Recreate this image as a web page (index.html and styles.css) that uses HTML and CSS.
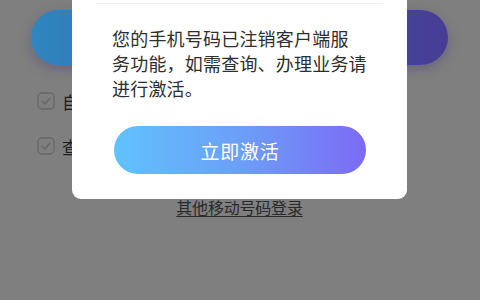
FILE: index.html
```html
<!DOCTYPE html>
<html lang="zh-CN">
<head>
<meta charset="utf-8">
<link rel="stylesheet" href="styles.css">
</head>
<body>
<div class="page">
  <div class="login-btn"></div>
  <div class="check-row row1">
    <span class="box"><svg viewBox="0 0 18 18" width="18" height="18"><rect x="1" y="1" width="16" height="16" rx="4" fill="none" stroke="#686868" stroke-width="1.4"/><path d="M5 9.2 L8 12 L13 6" fill="none" stroke="#686868" stroke-width="1.4" stroke-linecap="round" stroke-linejoin="round"/></svg></span>
    <span class="label">自动登录</span>
  </div>
  <div class="check-row row2">
    <span class="box"><svg viewBox="0 0 18 18" width="18" height="18"><rect x="1" y="1" width="16" height="16" rx="4" fill="none" stroke="#686868" stroke-width="1.4"/><path d="M5 9.2 L8 12 L13 6" fill="none" stroke="#686868" stroke-width="1.4" stroke-linecap="round" stroke-linejoin="round"/></svg></span>
    <span class="label">查看协议</span>
  </div>
  <div class="other-link"><span>其他移动号码登录</span></div>
</div>
<div class="modal">
  <div class="modal-head"></div>
  <p class="modal-text">您的手机号码已注销客户端服<br>务功能，如需查询、办理业务请<br>进行激活。</p>
  <div class="modal-btn">立即激活</div>
</div>
</body>
</html>
```
FILE: styles.css
```css
html, body {
  margin: 0;
  padding: 0;
}
body {
  width: 480px;
  height: 300px;
  overflow: hidden;
  background: #7f7f7f;
  font-family: "Noto Sans CJK SC", "Noto Sans", sans-serif;
  position: relative;
}
.page {
  display: flex;
  flex-direction: column;
  padding: 10px 32px 0 31px;
}
.login-btn {
  height: 55px;
  border-radius: 28px;
  background: linear-gradient(90deg, #2f86bf 0%, #3c5ea8 50%, #483c94 100%);
  box-shadow: 0 4px 12px rgba(60, 50, 120, 0.35);
}
.check-row {
  display: flex;
  align-items: center;
  gap: 7px;
  padding-left: 6px;
  height: 24px;
}
.row1 { margin-top: 24px; }
.row2 { margin-top: 21px; }
.box {
  display: flex;
  width: 18px;
  height: 18px;
}
.label {
  font-size: 17px;
  color: #1c1c1c;
}
.other-link {
  display: flex;
  justify-content: center;
  margin-top: 37px;
  font-size: 16px;
  color: #2a2a2a;
}
.other-link span {
  text-decoration: underline;
  text-underline-offset: 2px;
  letter-spacing: -0.2px;
}
.modal {
  position: absolute;
  left: 72px;
  top: -20px;
  width: 335px;
  height: 219px;
  background: #fff;
  border-radius: 9px;
  display: flex;
  flex-direction: column;
}
.modal-head {
  height: 23px;
  margin: 0 24px;
  border-bottom: 1px solid #f0f0f0;
  flex-shrink: 0;
}
.modal-text {
  margin: 22px 0 0 40px;
  font-size: 18px;
  line-height: 25px;
  color: #2e2e2e;
  white-space: nowrap;
  letter-spacing: 0.2px;
}
.modal-btn {
  margin: 25px 0 0 42px;
  width: 252px;
  height: 48px;
  border-radius: 24px;
  background: linear-gradient(90deg, #60c2fc 0%, #6c9ff8 50%, #7d6af4 100%);
  color: #fff;
  font-size: 19px;
  letter-spacing: 0.8px;
  display: flex;
  align-items: center;
  justify-content: center;
}
```
